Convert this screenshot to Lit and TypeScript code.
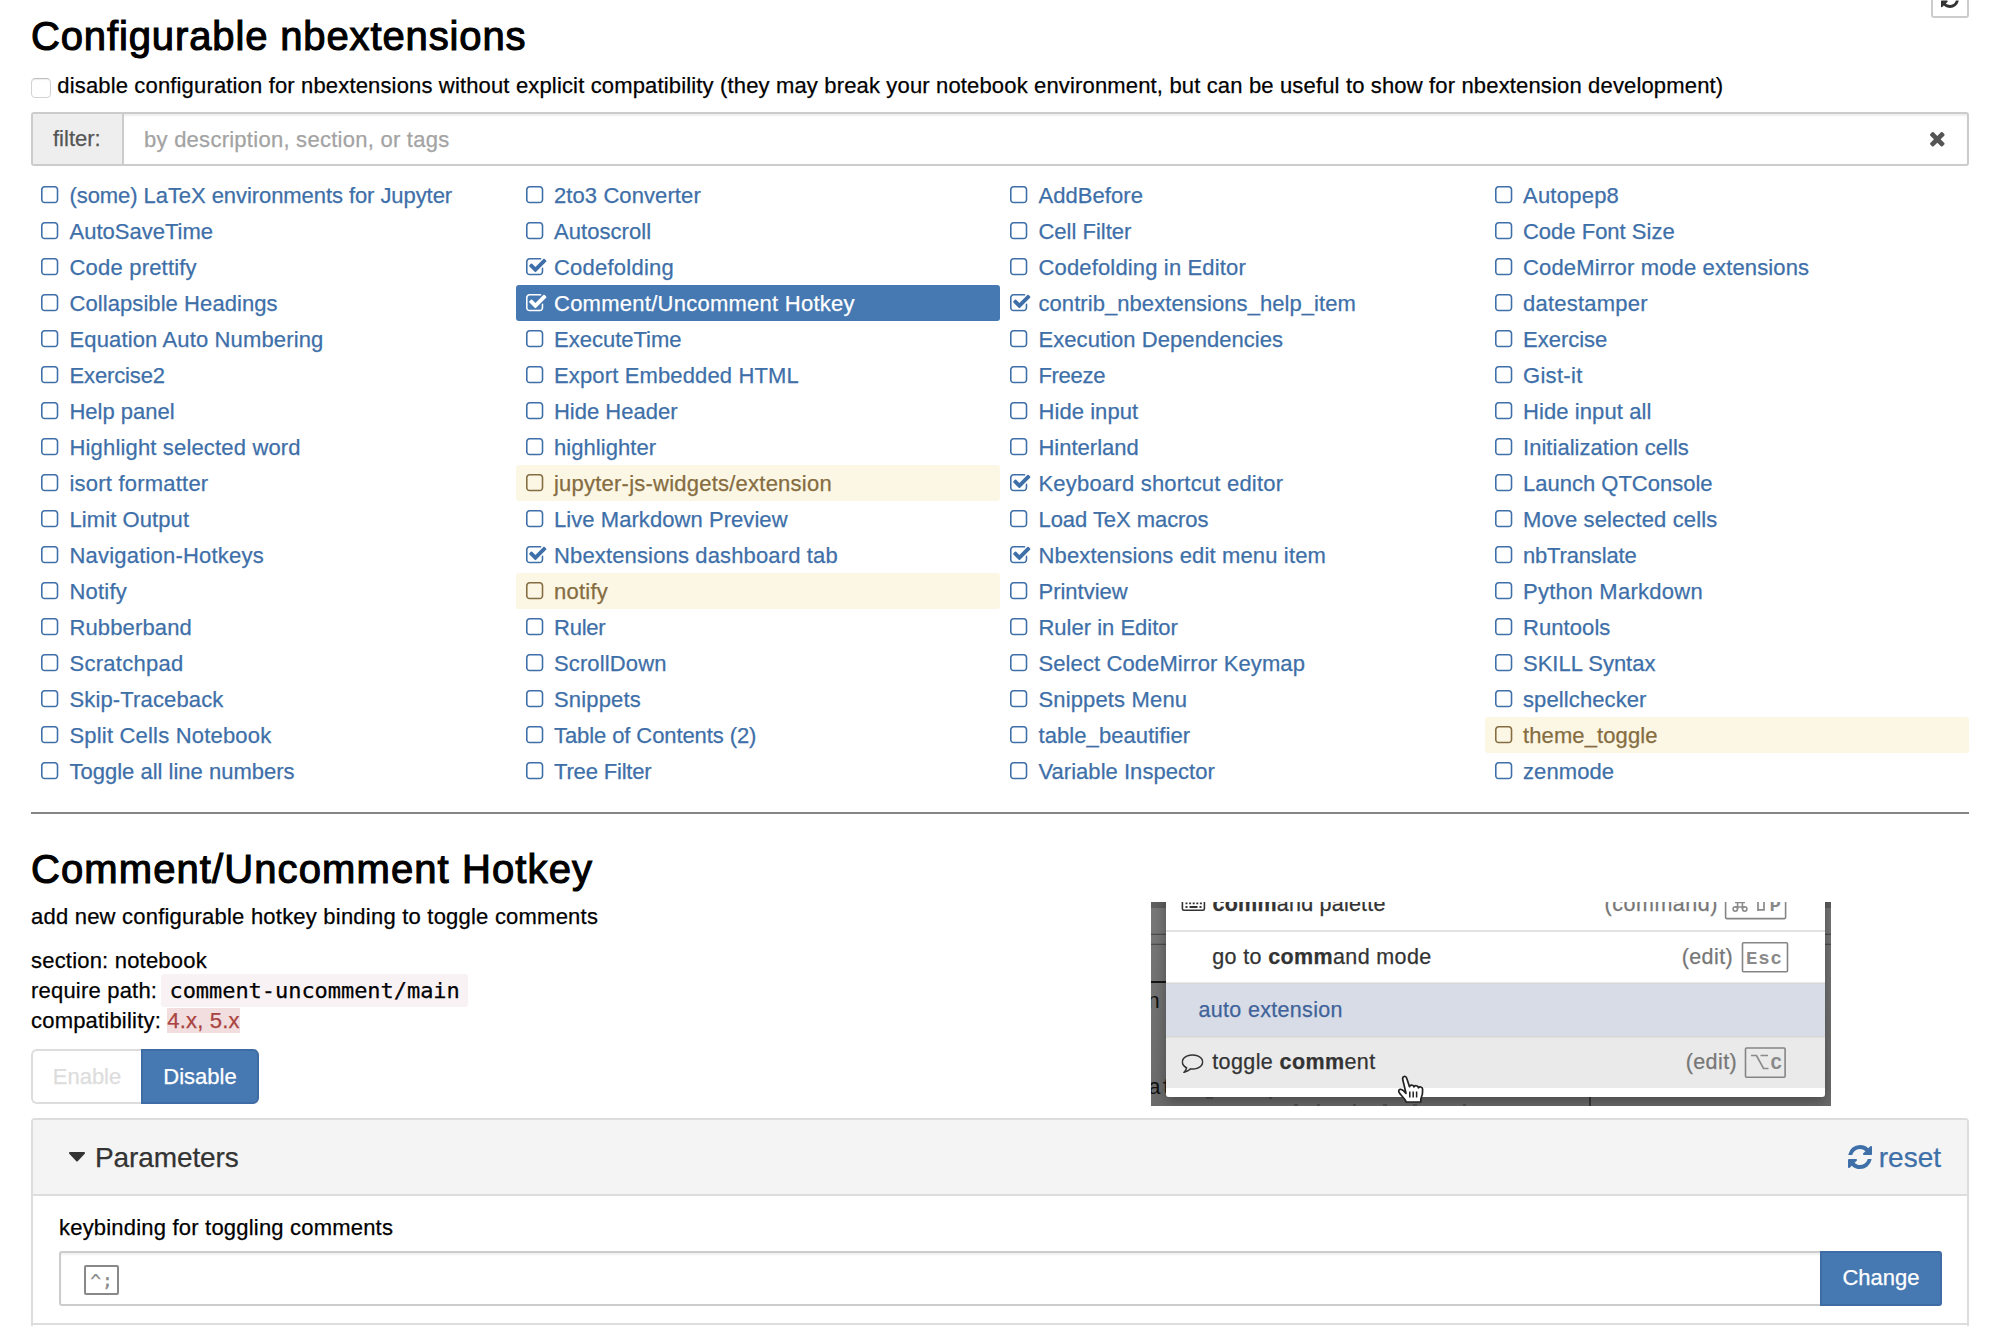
import { LitElement, html, css, svg } from "lit";
import { customElement, property, state } from "lit/decorators.js";
import { classMap } from "lit/directives/class-map.js";
import { styleMap } from "lit/directives/style-map.js";

const ICONS: Record<string, string> = {
  "square-o":
    "M1312 256h-832q-66 0-113 47t-47 113v832q0 66 47 113t113 47h832q66 0 113-47t47-113v-832q0-66-47-113t-113-47zm288 160v832q0 119-84.5 203.5t-203.5 84.5h-832q-119 0-203.5-84.5t-84.5-203.5v-832q0-119 84.5-203.5t203.5-84.5h832q119 0 203.5 84.5t84.5 203.5z",
  "check-square-o":
    "M1472 930v318q0 119-84.5 203.5t-203.5 84.5h-832q-119 0-203.5-84.5t-84.5-203.5v-832q0-119 84.5-203.5t203.5-84.5h832q63 0 117 25 15 7 18 23 3 17-9 29l-49 49q-10 10-23 10-3 0-9-2-23-6-45-6h-832q-66 0-113 47t-47 113v832q0 66 47 113t113 47h832q66 0 113-47t47-113v-254q0-13 9-22l64-64q10-10 23-10 6 0 12 3 20 8 20 29zm231-489l-814 814q-24 24-57 24t-57-24l-430-430q-24-24-24-57t24-57l110-110q24-24 57-24t57 24l263 263 647-647q24-24 57-24t57 24l110 110q24 24 24 57t-24 57z",
  refresh:
    "M1639 1056q0 5-1 7-64 268-268 434.5t-478 166.5q-146 0-282.5-55t-243.5-157l-129 129q-19 19-45 19t-45-19-19-45v-448q0-26 19-45t45-19h448q26 0 45 19t19 45-19 45l-137 137q71 66 161 102t187 36q134 0 250-65t186-179q11-17 53-117 8-23 30-23h192q13 0 22.5 9.5t9.5 22.5zm25-800v448q0 26-19 45t-45 19h-448q-26 0-45-19t-19-45 19-45l138-138q-148-137-349-137-134 0-250 65t-186 179q-11 17-53 117-8 23-30 23h-199q-13 0-22.5-9.5t-9.5-22.5v-7q65-268 270-434.5t480-166.5q146 0 284 55.5t245 156.5l130-129q19-19 45-19t45 19 19 45z",
  times:
    "M1490 1322q0 40-28 68l-136 136q-28 28-68 28t-68-28l-294-294-294 294q-28 28-68 28t-68-28l-136-136q-28-28-28-68t28-68l294-294-294-294q-28-28-28-68t28-68l136-136q28-28 68-28t68 28l294 294 294-294q28-28 68-28t68 28l136 136q28 28 28 68t-28 68l-294 294 294 294q28 28 28 68z",
  "caret-down":
    "M1408 704q0 26-19 45l-448 448q-19 19-45 19t-45-19l-448-448q-19-19-19-45t19-45 45-19h896q26 0 45 19t19 45z",
};

const COMMENT_ICON =
  "M896 384q-204 0-381.5 69.5t-282 187.5-104.5 255q0 112 71.5 213.5t201.5 175.5l87 50-27 96q-24 91-70 172 152-63 275-171l43-38 57 6q69 8 130 8 204 0 381.5-69.5t282-187.5 104.5-255-104.5-255-282-187.5-381.5-69.5zm896 512q0 174-120 321.5t-326 233-450 85.5q-70 0-145-8-198 175-460 242-49 14-114 22h-5q-15 0-27-10.5t-16-27.5v-1q-3-4-.5-12t2-10 4.5-9.5l6-9 7-8.5 8-9q7-8 31-34.5t34.5-38 31-39.5 32.5-51 27-59 26-76q-157-89-247.5-220t-90.5-281q0-174 120-321.5t326-233 450-85.5 450 85.5 326 233 120 321.5z";

@customElement("fa-icon")
class FaIcon extends LitElement {
  @property() name = "square-o";
  @property({ attribute: "box" }) box = "0 0 1792 1792";

  static styles = css`
    :host { display: block; }
    .glyph { display: block; width: 100%; height: 100%; fill: currentColor; overflow: visible; }
  `;

  render() {
    return html`<svg class="glyph" viewBox=${this.box} preserveAspectRatio="none">
      <path d=${ICONS[this.name]}></path>
    </svg>`;
  }
}

type Status = "" | "on" | "warn";

/* name, extra width in px spread over the label's letters, status */
type Ext = [string, number, Status?];

const EXTENSIONS: Ext[] = [
  ["(some) LaTeX environments for Jupyter", -2.6], ["2to3 Converter", 1.3], ["AddBefore", 0.6], ["Autopep8", 1.9],
  ["AutoSaveTime", 0], ["Autoscroll", 0.6], ["Cell Filter", 0], ["Code Font Size", 0],
  ["Code prettify", 2.6], ["Codefolding", 2.6, "on"], ["Codefolding in Editor", 3.2], ["CodeMirror mode extensions", 3.8],
  ["Collapsible Headings", 1.5], ["Comment/Uncomment Hotkey", 6.2, "on"], ["contrib_nbextensions_help_item", 1.9, "on"], ["datestamper", 2.4],
  ["Equation Auto Numbering", 3.2], ["ExecuteTime", 0], ["Execution Dependencies", 1.3], ["Exercise", 0],
  ["Exercise2", -1.2], ["Export Embedded HTML", 2.8], ["Freeze", -1.9], ["Gist-it", 2.2],
  ["Help panel", 0], ["Hide Header", 0], ["Hide input", 0.6], ["Hide input all", 1.3],
  ["Highlight selected word", 3.8], ["highlighter", 0.6], ["Hinterland", 0], ["Initialization cells", 0.8],
  ["isort formatter", 3.2], ["jupyter-js-widgets/extension", 6.4, "warn"], ["Keyboard shortcut editor", 5.1, "on"], ["Launch QTConsole", 0],
  ["Limit Output", 1], ["Live Markdown Preview", 1.3], ["Load TeX macros", -0.8], ["Move selected cells", 2.4],
  ["Navigation-Hotkeys", 3.6], ["Nbextensions dashboard tab", 3.8, "on"], ["Nbextensions edit menu item", 3.8, "on"], ["nbTranslate", -1.9],
  ["Notify", 1.3], ["notify", 1.5, "warn"], ["Printview", 0], ["Python Markdown", 3.8],
  ["Rubberband", 1.3], ["Ruler", -1.1], ["Ruler in Editor", 0], ["Runtools", 0.6],
  ["Scratchpad", 2.6], ["ScrollDown", 1.3], ["Select CodeMirror Keymap", 2.4], ["SKILL Syntax", 0],
  ["Skip-Traceback", 1.9], ["Snippets", 1.3], ["Snippets Menu", 1.9], ["spellchecker", 1.3],
  ["Split Cells Notebook", 3.8], ["Table of Contents (2)", -1.9], ["table_beautifier", 1.3], ["theme_toggle", 1.3, "warn"],
  ["Toggle all line numbers", 0], ["Tree Filter", -1.9], ["Variable Inspector", 0.6], ["zenmode", 0.6],
];

@customElement("ext-list")
class ExtList extends LitElement {
  @state() selected = "Comment/Uncomment Hotkey";

  static styles = css`
    :host { display: block; }
    .grid { display: grid; grid-template-columns: repeat(4, 1fr); grid-auto-rows: 36px; }
    .item {
      display: flex; align-items: center; height: 36px; padding-left: 10px; border-radius: 3px;
      color: #3e6fa8; line-height: 34px; white-space: nowrap; cursor: pointer;
      -webkit-text-stroke: 0.25px currentColor;
    }
    .item.incompatible { background: #fbf7e4; color: #866c41; }
    .item.selected { background: #4678b2; color: #fff; }
    .box { flex: none; width: 17.3px; height: 17.3px; margin: -1px 11.2px 0 0; }
    .box.checked { width: 20.3px; margin-right: 8.2px; }
    .label { padding-top: 2px; }
  `;

  render() {
    return html`<div class="grid">
      ${EXTENSIONS.map(
        ([name, extra, status = ""]) => html`<div
          class=${classMap({ item: true, incompatible: status === "warn", selected: name === this.selected })}
          @click=${() => (this.selected = name)}
        >
          <fa-icon
            class=${classMap({ box: true, checked: status === "on" })}
            name=${status === "on" ? "check-square-o" : "square-o"}
            box=${status === "on" ? "64 128 1656 1408" : "192 128 1408 1408"}
          ></fa-icon>
          <span class="label" style=${styleMap({ letterSpacing: `${(extra / name.length).toFixed(3)}px` })}>${name}</span>
        </div>`
      )}
    </div>`;
  }
}

/* Preview illustration of the command palette, drawn in its own 680x204 space. */
@customElement("palette-preview")
class PalettePreview extends LitElement {
  static styles = css`
    :host { display: block; }
    .art { display: block; width: 680px; height: 204px; }
    .t { font: 21.5px "Liberation Sans", Arial, sans-serif; fill: #333; stroke: #333; stroke-width: 0.25px; }
    .b { font-weight: 700; }
    .dim { fill: #777; stroke: #777; }
    .blue { fill: #40639a; stroke: #40639a; }
    .mono { font: 700 19px "Liberation Mono", monospace; fill: #8a8a8a; }
    .code { font: 22px "Liberation Mono", monospace; fill: #111; }
    .key { fill: none; stroke: #858585; stroke-width: 1.6; }
  `;

  render() {
    return html`<svg class="art" viewBox="0 0 680 204">
      <defs>
        <linearGradient id="side" x1="0" y1="0" x2="0" y2="1">
          <stop offset="0" stop-color="#787878"></stop>
          <stop offset="1" stop-color="#6b6b6b"></stop>
        </linearGradient>
        <filter id="shade" x="-10%" y="-10%" width="120%" height="130%">
          <feDropShadow dx="0" dy="4" stdDeviation="7" flood-opacity="0.35"></feDropShadow>
        </filter>
      </defs>
      <rect width="680" height="204" fill="url(#side)"></rect>
      <rect width="680" height="6" fill="#606060"></rect>
      <path d="M0 32.3H680M0 42.3H680" stroke="#4d4d4d" stroke-width="1.2"></path>
      <path d="M0 80H20" stroke="#151515" stroke-width="2"></path>
      <path d="M439 190V204" stroke="#1c1c1c" stroke-width="1.2"></path>
      <text class="code" x="-4" y="106">n</text>
      <text class="code" x="-3" y="192">at</text>
      <path d="M55 196h7M118 196h3M143 203h4M166 203h3M202 203h3M232 203h4M262 203h4M312 203h3" stroke="#3a3a3a" stroke-width="1"></path>
      <path filter="url(#shade)" d="M15 -20H674V192a3 3 0 0 1-3 3H18a3 3 0 0 1-3-3z" fill="#fff"></path>
      <path d="M15 29H674" stroke="#d8d8d8" stroke-width="1.6"></path>
      <rect x="15" y="81" width="659" height="54" fill="#d7dce6"></rect>
      <rect x="15" y="135" width="659" height="51" fill="#eaeaea"></rect>
      <path d="M15 81.2H674M15 134.8H674" stroke="#d6d7d4" stroke-width="1.4"></path>

      <g fill="none" stroke="#333" stroke-width="1.6">
        <rect x="31.4" y="-6" width="22" height="14.2" rx="1.5"></rect>
        <path d="M34.5 1.4h16.5" stroke-dasharray="2 1.6" stroke-width="1.8"></path>
        <path d="M34.5 5h2M38.5 5h8M48.5 5h2" stroke-width="1.8"></path>
      </g>
      ${svg`<text class="t" x="61.5" y="9" textLength="173" lengthAdjust="spacing"><tspan class="b">comm</tspan>and palette</text>
      <text class="t dim" x="453.5" y="9" textLength="113">(command)</text>
      <rect class="key" x="574.6" y="-12" width="60" height="28.6" rx="1"></rect>
      <text class="mono" x="618.5" y="8.7">P</text>

      <text class="t" x="61.2" y="62" textLength="219"><tspan>go to </tspan><tspan class="b">comm</tspan><tspan>and mode</tspan></text>
      <text class="t dim" x="530.7" y="62" textLength="51">(edit)</text>
      <rect class="key" x="591.5" y="40.8" width="45" height="29" rx="1"></rect>
      <text class="mono" x="595" y="61.5" textLength="36">Esc</text>

      <text class="t blue" x="47.5" y="114.6" textLength="144">auto extension</text>

      <text class="t" x="61.2" y="167" textLength="163"><tspan>toggle </tspan><tspan class="b">comm</tspan><tspan>ent</tspan></text>
      <text class="t dim" x="534.7" y="167" textLength="51">(edit)</text>
      <rect class="key" x="594.5" y="146" width="39.6" height="29.2" rx="1"></rect>
      <text class="mono" x="619.5" y="166.8">C</text>`}
      <path d="M600 153.5h5.5l7 13h5M609.5 153.5h7.5" fill="none" stroke="#8a8a8a" stroke-width="1.7"></path>
      <path d="M607 9V-1h-4l7-7 7 7h-4v8.8h-6" fill="none" stroke="#8a8a8a" stroke-width="1.7"></path>
      <g fill="none" stroke="#8a8a8a" stroke-width="1.6">
        <path d="M584 .5h10M584 5h10M586.6 -2v9M591.4 -2v9"></path>
        <circle cx="584.3" cy="7" r="2.2"></circle><circle cx="593.7" cy="7" r="2.2"></circle>
      </g>
      <svg x="30.5" y="149" width="22" height="22" viewBox="0 0 1792 1792"><path d=${COMMENT_ICON} fill="#333"></path></svg>
      <g transform="translate(247 173.5)">
        <path d="M8.2 26.5C7.4 23 1.5 19 .8 16.2c-.6-2.5 2.4-3.2 4.6-1L8 17.8 4.8 4.2C4 .6 7.8-.2 8.8 3l2.7 8.2c.6-2.4 4-2 4.5.3.8-2 4-1.6 4.4.8 1-1.6 4-1 4.2 1.2.5 4.6-.4 7.2-1.8 10.2v2.8z" fill="#fff" stroke="#222" stroke-width="1.7" stroke-linejoin="round"></path>
        <path d="M11.8 16v6M15.2 16v6M18.6 16v6" stroke="#222" stroke-width="1.5"></path>
      </g>
    </svg>`;
  }
}

@customElement("app-root")
class AppRoot extends LitElement {
  static styles = css`
    :host {
      display: block; box-sizing: border-box; width: 2012px; height: 1326px; overflow: hidden;
      padding: 0 43px 0 31px; background: #fff; color: #000;
      font: 22px/30px "Liberation Sans", Arial, Helvetica, sans-serif;
      -webkit-text-stroke: 0.25px currentColor;
    }
    .top { display: flex; justify-content: space-between; align-items: flex-start; height: 71px; }
    h1, h2 { margin: 0; font-size: 40px; line-height: 44px; font-weight: 400; -webkit-text-stroke: 1.1px #000; white-space: nowrap; }
    h1 { padding-top: 14px; letter-spacing: 0.87px; }
    h2 { letter-spacing: 1.1px; }
    .refresh-btn {
      box-sizing: border-box; width: 38px; height: 38px; margin-top: -20px;
      border: 2px solid #ccc; border-radius: 3px; background: #fff; color: #333;
      display: flex; justify-content: center; align-items: center;
    }
    .refresh-btn fa-icon { width: 18px; height: 18px; }
    .compat-toggle { display: flex; height: 30px; white-space: nowrap; letter-spacing: 0.156px; }
    .tick {
      box-sizing: border-box; width: 20px; height: 20px; margin: 7px 6px 0 0.3px;
      border: 1.5px solid #d2d2d2; border-top-color: #bdbdbd; border-radius: 4.5px; background: #fff;
      box-shadow: inset 0 1px 1px #eee;
    }
    .filter {
      display: flex; align-items: center; box-sizing: border-box; height: 54px; margin-top: 11px;
      border: 2px solid #ccc; border-radius: 3px; box-shadow: inset 0 2px 2px rgba(0, 0, 0, 0.07);
    }
    .addon {
      box-sizing: border-box; width: 91px; height: 50px; padding-left: 20px; line-height: 50px;
      background: #eee; border-right: 2px solid #ccc; color: #555;
    }
    .placeholder { flex: 1; padding: 2px 0 0 20px; color: #a3a3a3; letter-spacing: 0.26px; }
    .clear { width: 14.6px; height: 14.6px; margin: 1px 22px 0 0; color: #555; }
    ext-list { margin-top: 11px; }
    .rule { height: 2px; margin: 23px 0 33px; background: #858585; }
    .detail { display: flex; justify-content: space-between; height: 271px; }
    palette-preview { margin: 55px 138px 0 0; }
    .info { margin-top: 11px; letter-spacing: 0.22px; }
    .meta { margin-top: 14px; letter-spacing: 0.2px; }
    .line { height: 30px; white-space: nowrap; }
    .path {
      display: inline-block; height: 33px; line-height: 33px; margin: -2px 0 -1px -2px; padding: 0 8px; vertical-align: top;
      font-family: "DejaVu Sans Mono", monospace; font-size: 22px; letter-spacing: -0.05px;
      background: #f9f2f4; border-radius: 3px;
    }
    .bad { background: #f2dede; color: #a94442; }
    .buttons { display: flex; margin-top: 13px; }
    .btn { box-sizing: border-box; height: 55px; line-height: 51px; text-align: center; }
    .enable { width: 110px; border: 2px solid #ddd; border-right: 0; border-radius: 6px 0 0 6px; color: #ddd; }
    .disable { width: 118px; border: 2px solid #3f6ca5; border-radius: 0 6px 6px 0; background: #4678b2; color: #fff; }
    .panel { border: 2px solid #ddd; border-radius: 4px 4px 0 0; height: 240px; }
    .panel-head {
      display: flex; align-items: center; height: 74px; padding: 0 26px 0 36px;
      background: #f4f4f4; border-bottom: 2px solid #ddd; font-size: 28px; color: #333;
    }
    .panel-head .caret { width: 16px; height: 9.5px; margin-right: 10px; }
    .panel-head .title { flex: 1; padding-top: 2px; letter-spacing: -0.1px; }
    .reset { display: flex; align-items: center; gap: 7px; color: #3e6fa8; }
    .reset-text { padding-top: 2px; }
    .reset fa-icon { width: 24px; height: 24px; margin-top: -1px; }
    .param { padding: 17px 25px 17px 26px; border-bottom: 2px solid #ddd; }
    .param-label { letter-spacing: 0.2px; }
    .field { display: flex; margin-top: 8px; }
    .hotkey {
      flex: 1; box-sizing: border-box; height: 55px; padding: 12px 0 0 23px;
      border: 2px solid #ccc; border-right: 0; border-radius: 3px 0 0 3px;
      box-shadow: inset 0 2px 2px rgba(0, 0, 0, 0.06);
    }
    .kbd {
      box-sizing: border-box; width: 35px; height: 30px; border: 2px solid #888; border-radius: 2px;
      font: 18px/27px "DejaVu Sans Mono", monospace; color: #888; display: flex; justify-content: center; gap: 1px;
    }
    .change { width: 122px; line-height: 49px; border: 2px solid #3f6ca5; border-radius: 0 3px 3px 0; background: #4678b2; color: #fff; }
  `;

  render() {
    return html`
      <div class="top">
        <h1>Configurable nbextensions</h1>
        <div class="refresh-btn"><fa-icon name="refresh" box="128 128 1536 1536"></fa-icon></div>
      </div>
      <div class="compat-toggle">
        <span class="tick"></span>
        <span>disable configuration for nbextensions without explicit compatibility (they may break your notebook environment, but can be useful to show for nbextension development)</span>
      </div>
      <div class="filter">
        <div class="addon">filter:</div>
        <div class="placeholder">by description, section, or tags</div>
        <fa-icon class="clear" name="times" box="302 366 1188 1188"></fa-icon>
      </div>
      <ext-list></ext-list>
      <div class="rule"></div>
      <div class="detail">
        <div>
          <h2>Comment/Uncomment Hotkey</h2>
          <div class="info line">add new configurable hotkey binding to toggle comments</div>
          <div class="meta">
            <div class="line">section: notebook</div>
            <div class="line">require path: <span class="path">comment-uncomment/main</span></div>
            <div class="line">compatibility: <span class="bad">4.x, 5.x</span></div>
          </div>
          <div class="buttons">
            <div class="btn enable">Enable</div>
            <div class="btn disable">Disable</div>
          </div>
        </div>
        <palette-preview></palette-preview>
      </div>
      <div class="panel">
        <div class="panel-head">
          <fa-icon class="caret" name="caret-down" box="384 640 1024 576"></fa-icon>
          <span class="title">Parameters</span>
          <span class="reset"><fa-icon name="refresh" box="128 128 1536 1536"></fa-icon><span class="reset-text">reset</span></span>
        </div>
        <div class="param">
          <div class="param-label">keybinding for toggling comments</div>
          <div class="field">
            <div class="hotkey"><div class="kbd"><span>^</span><span>;</span></div></div>
            <div class="btn change">Change</div>
          </div>
        </div>
      </div>
    `;
  }
}
